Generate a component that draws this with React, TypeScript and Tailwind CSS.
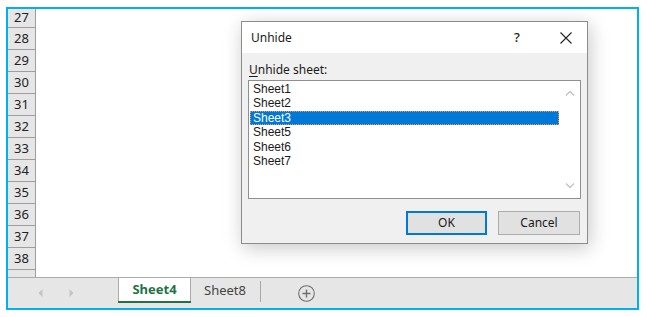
import React from "react"

const ROWS = [28, 29, 30, 31, 32, 33, 34, 35, 36, 37, 38]
const SHEETS = ["Sheet1", "Sheet2", "Sheet3", "Sheet5", "Sheet6", "Sheet7"]

function Chevron({ up }: { up?: boolean }) {
  return (
    <svg width="10" height="6" viewBox="0 0 10 6" className="block">
      <path
        d={up ? "M1 5.5 L5 1.5 L9 5.5" : "M1 0.5 L5 4.5 L9 0.5"}
        fill="none"
        stroke="#c2c2c2"
        strokeWidth="1.3"
      />
    </svg>
  )
}

function UnhideDialog() {
  return (
    <div className="absolute left-[241px] top-[21px] w-[347px] h-[223px] border border-[#8c8c8c] bg-[#f0f0f0] shadow-[2px_4px_18px_rgba(0,0,0,0.22)] flex flex-col">
      {/* Title bar */}
      <div className="h-[31px] bg-white flex items-center pl-[9px] pr-[15px] text-[12px] text-[#1a1a1a]">
        <span className="flex-1">Unhide</span>
        <span className="w-[12px] text-center text-[13px] font-medium mr-[37px]">?</span>
        <svg width="12" height="12" viewBox="0 0 12 12">
          <path d="M0.5 0.5 L11.5 11.5 M11.5 0.5 L0.5 11.5" stroke="#222" strokeWidth="1.1" />
        </svg>
      </div>

      {/* Body */}
      <div className="flex-1 flex flex-col px-[6px]">
        <div className="mt-[9px] ml-[1px] h-[16px] leading-[16px] text-[12px] text-[#1a1a1a]">
          <span className="underline underline-offset-2">U</span>nhide sheet:
        </div>
        <div className="mt-[2px] h-[119px] border border-[#8f8f8f] bg-white flex">
          <div className="flex-1 pt-[1px] pl-[1px] pr-[1px] font-['Liberation_Sans',sans-serif]">
            {SHEETS.map((s) => {
              const sel = s === "Sheet3"
              return (
                <div
                  key={s}
                  className={
                    sel
                      ? "h-[14.4px] leading-[12.4px] pl-[2px] text-[12px] text-white bg-[#0078d7] border border-dotted border-[#f0a040]"
                      : "h-[14.4px] leading-[14.4px] pl-[3px] text-[12px] text-[#1a1a1a]"
                  }
                >
                  {s}
                </div>
              )
            })}
          </div>
          <div className="w-[20px] flex flex-col items-center justify-between pt-[9px] pb-[9px]">
            <Chevron up />
            <Chevron />
          </div>
        </div>
        <div className="mt-[12px] flex justify-end gap-[11px] pr-[1px]">
          <button className="w-[81px] h-[24px] border-2 border-[#0078d7] bg-[#e1e1e1] text-[12px] text-[#1a1a1a]">
            OK
          </button>
          <button className="w-[82px] h-[24px] border border-[#adadad] bg-[#e1e1e1] text-[12px] text-[#1a1a1a]">
            Cancel
          </button>
        </div>
      </div>
    </div>
  )
}

export default function App() {
  return (
    <div className="relative w-[647px] h-[317px] bg-white overflow-hidden font-['Noto_Sans',sans-serif]">
      <div className="ml-[6px] mt-[7px] w-[633px] h-[303px] border-2 border-[#00b0f0] flex flex-col">
        {/* Grid area */}
        <div className="flex-1 flex">
          <div className="w-[28px] bg-[#e6e6e6] border-r border-[#9e9e9e] flex flex-col text-[13px] text-[#222]">
            <div className="h-[19px] leading-[17px] border-b border-[#9e9e9e] text-center">27</div>
            {ROWS.map((r) => (
              <div key={r} className="h-[22px] leading-[21px] border-b border-[#9e9e9e] text-center">
                {r}
              </div>
            ))}
          </div>
          <div className="flex-1 bg-white" />
        </div>

        {/* Sheet tab bar */}
        <div className="h-[31px] bg-[#e6e6e6] border-t border-[#ababab] flex items-start text-[13px]">
          <div className="w-[110px] h-full flex items-center">
            <svg width="5" height="8" viewBox="0 0 5 8" className="ml-[30px]">
              <path d="M4.5 0 L0.5 4 L4.5 8 Z" fill="#c4c4c4" />
            </svg>
            <svg width="5" height="8" viewBox="0 0 5 8" className="ml-[26px]">
              <path d="M0.5 0 L4.5 4 L0.5 8 Z" fill="#c4c4c4" />
            </svg>
          </div>
          <div className="w-[73px] h-[26px] -mt-[1px] bg-white border-x border-t border-[#ababab] flex flex-col">
            <div className="flex-1 flex items-center justify-center font-bold text-[#217346]">Sheet4</div>
            <div className="h-[2px] bg-[#217346] -mx-[1px]" />
          </div>
          <div className="w-[70px] h-[26px] flex items-center">
            <span className="ml-[13px] text-[#444]">Sheet8</span>
            <div className="ml-auto w-[1px] h-[21px] bg-[#a8a8a8]" />
          </div>
          <div className="ml-[37px] h-[30px] flex items-center">
            <svg width="17" height="17" viewBox="0 0 17 17">
              <circle cx="8.5" cy="8.5" r="7.8" fill="none" stroke="#6e6e6e" strokeWidth="1.1" />
              <path d="M8.5 4.5 V12.5 M4.5 8.5 H12.5" stroke="#6e6e6e" strokeWidth="1.4" />
            </svg>
          </div>
        </div>
      </div>

      <UnhideDialog />
    </div>
  )
}
